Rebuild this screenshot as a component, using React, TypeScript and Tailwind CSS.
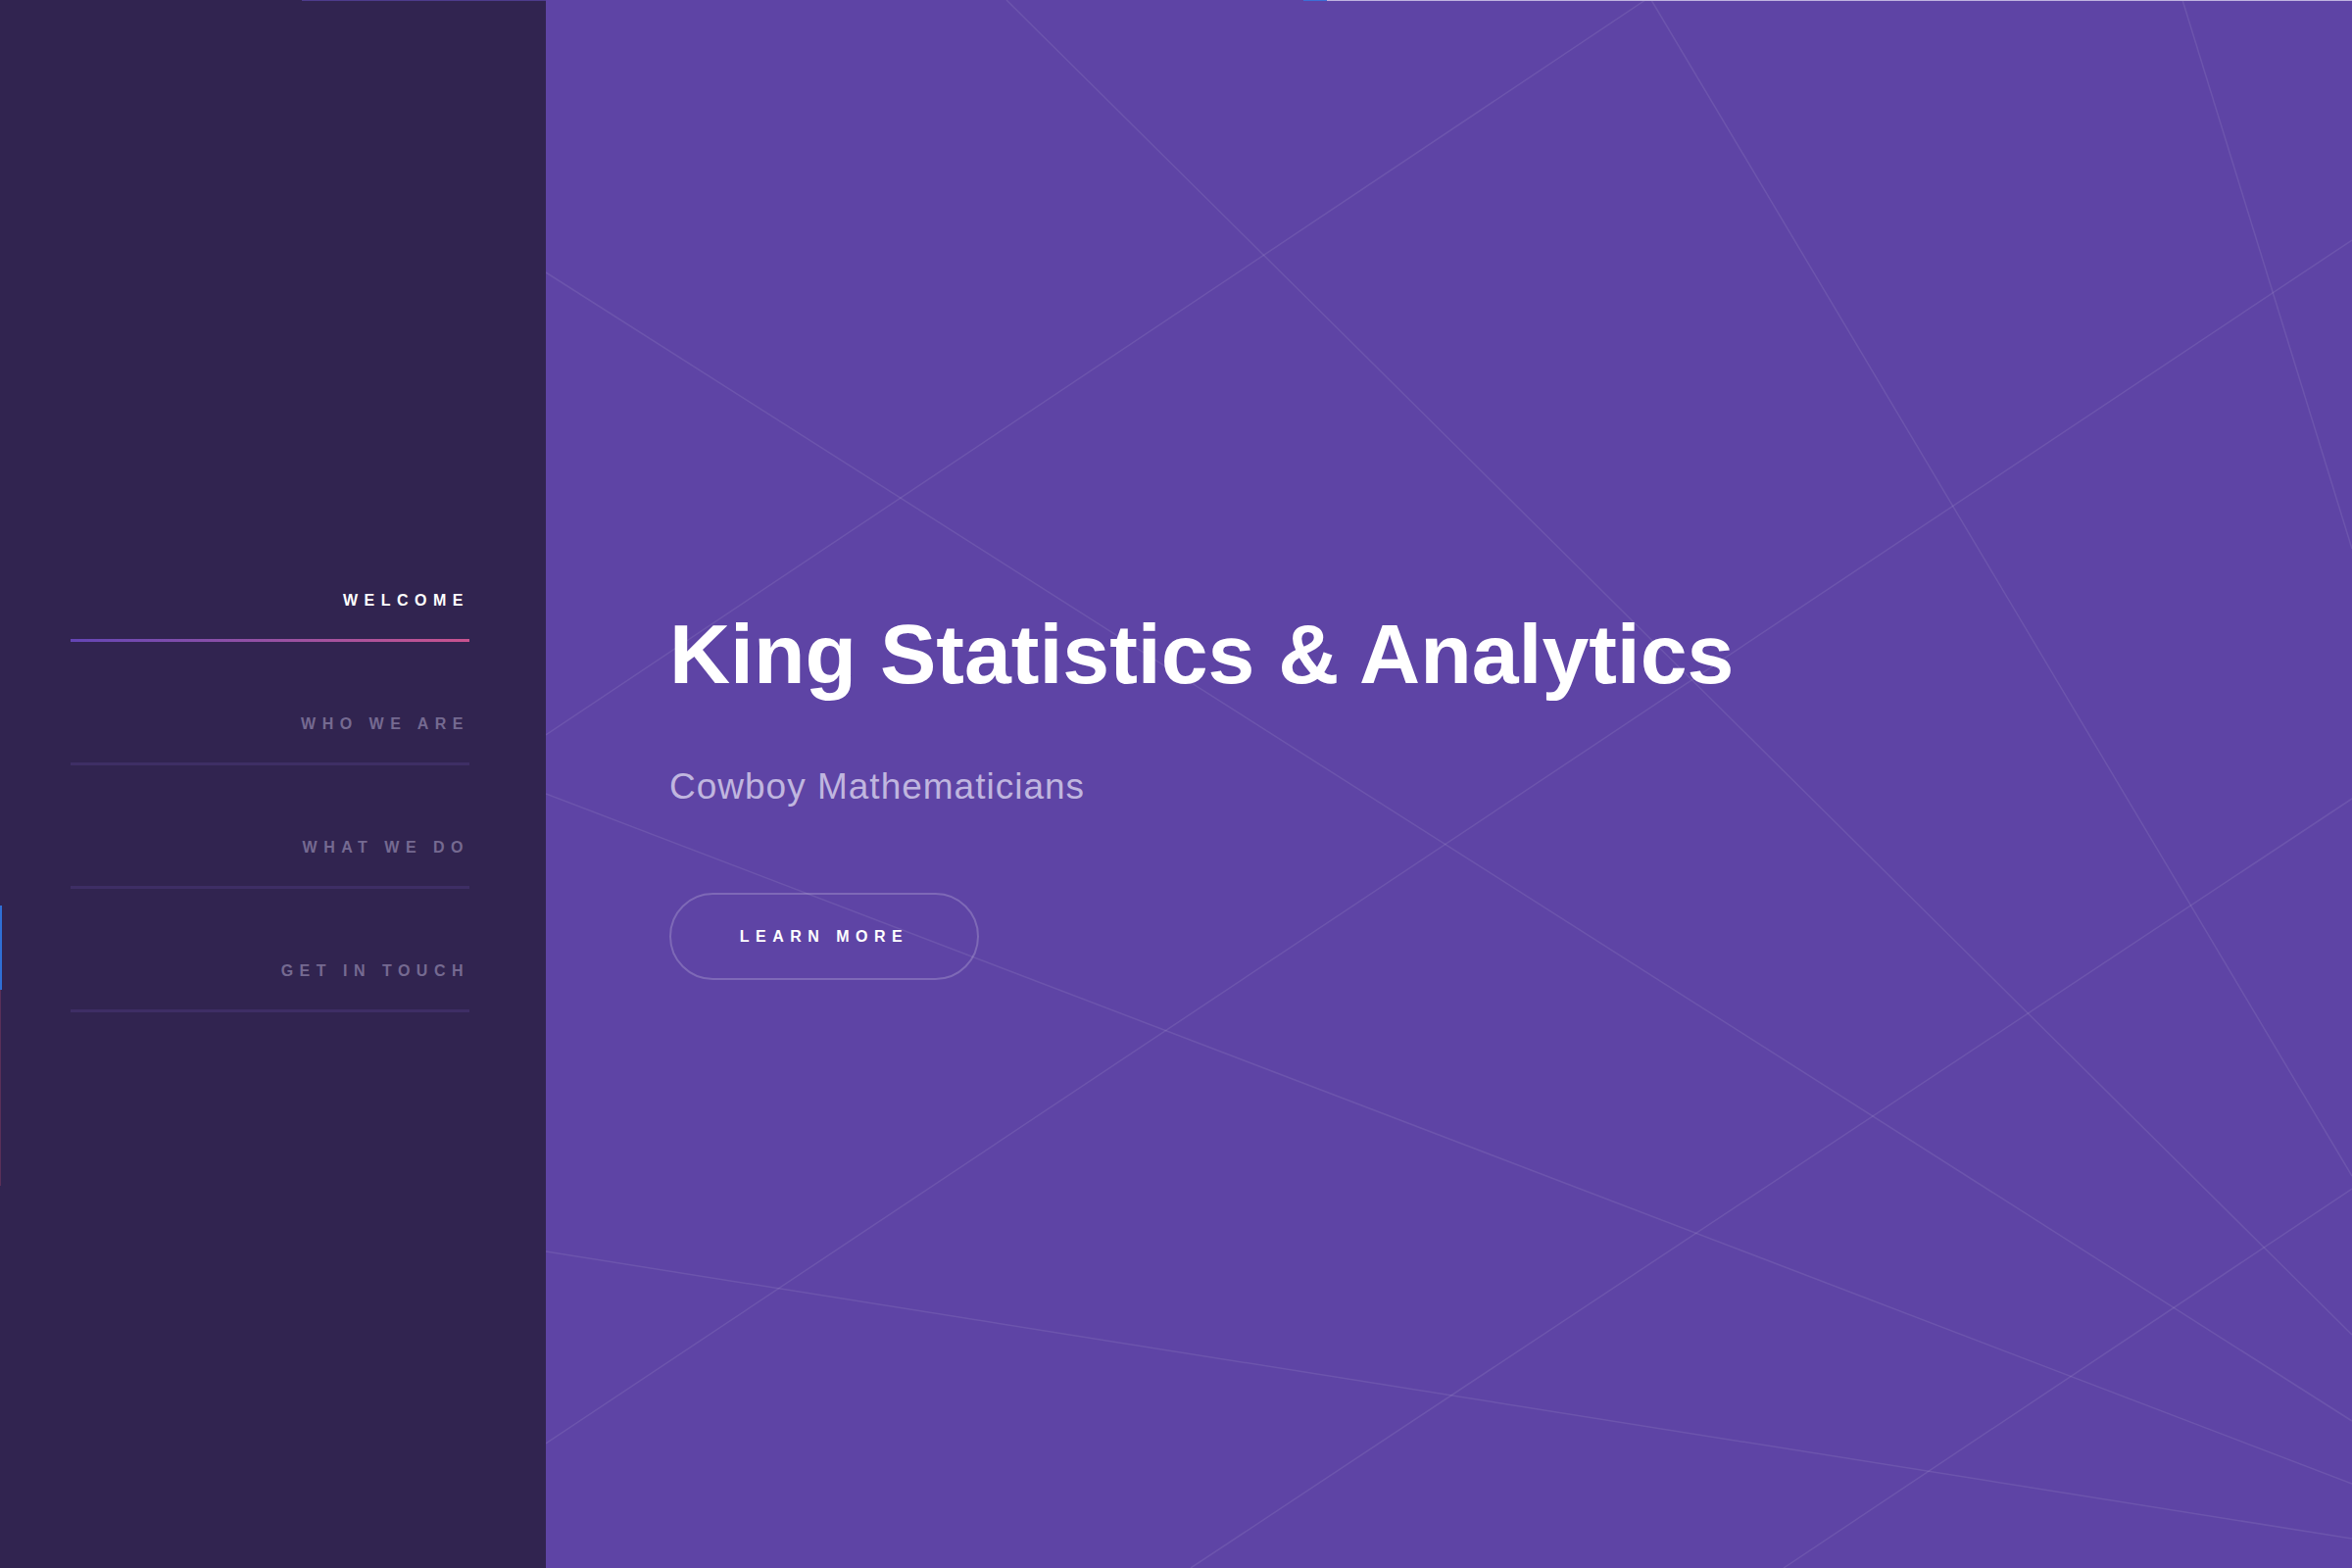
import React from 'react';

const navItems = [
  { label: 'WELCOME', active: true },
  { label: 'WHO WE ARE', active: false },
  { label: 'WHAT WE DO', active: false },
  { label: 'GET IN TOUCH', active: false },
];

// background polygon lines, coords relative to the main panel (1843 x 1600)
const lines: Array<[number, number, number, number]> = [
  [470, 0, 1843, 1362],
  [1122, 0, 0, 750],
  [1128, 0, 1843, 1200],
  [1670, 0, 1843, 560],
  [0, 278, 1843, 1450],
  [1843, 245, 0, 1473],
  [0, 810, 1843, 1514],
  [0, 1277, 1843, 1570],
  [1843, 1213, 1263, 1600],
  [1843, 815, 658, 1600],
];

function Sidebar() {
  return (
    <aside className="relative w-[557px] shrink-0 bg-[#312450] pt-[529px] pl-[72px] pr-[78px]">
      <div className="absolute left-[308px] top-0 h-px w-[249px] bg-[#4d3b8c]" />
      <div className="absolute left-0 top-[924px] h-[86px] w-[2px] bg-[#2f6fd6]" />
      <div className="absolute left-0 top-[1010px] h-[200px] w-px bg-[#5a2f58]" />
      <nav className="flex flex-col">
        {navItems.map((item) => (
          <a key={item.label} href="#" className="block pt-[74px]">
            <span
              className={`block text-right text-[16px] leading-[20px] font-bold tracking-[6.5px] ${
                item.active ? 'text-white' : 'text-[#756a91]'
              }`}
            >
              {item.label}
            </span>
            <span
              className={`mt-[29px] block h-[3px] w-full ${
                item.active
                  ? 'bg-gradient-to-r from-[#6445b5] to-[#c9528f]'
                  : 'bg-[#3e2e65]'
              }`}
            />
          </a>
        ))}
      </nav>
    </aside>
  );
}

function Hero() {
  return (
    <main className="relative flex-1 overflow-hidden bg-[#5e44a5]">
      <svg
        className="absolute inset-0 h-full w-full"
        viewBox="0 0 1843 1600"
        preserveAspectRatio="none"
      >
        {lines.map(([x1, y1, x2, y2], i) => (
          <line
            key={i}
            x1={x1}
            y1={y1}
            x2={x2}
            y2={y2}
            stroke="#ffffff"
            strokeOpacity={0.09}
            strokeWidth={1.5}
          />
        ))}
      </svg>
      <div className="absolute left-[773px] top-0 h-px w-[24px] bg-[#3b6fd6]" />
      <div className="absolute left-[797px] top-0 h-px right-0 bg-[#bfb4e0]" />

      <div className="relative flex flex-col items-start pt-[624px] pl-[126px]">
        <h1 className="text-[86px] leading-none font-bold text-white">
          King Statistics &amp; Analytics
        </h1>
        <p className="mt-[74px] text-[37px] leading-none tracking-[1px] text-[#c0b6df]">
          Cowboy Mathematicians
        </p>
        <button className="mt-[90px] flex h-[89px] w-[316px] items-center justify-center rounded-full border-2 border-white/20 text-[16px] font-bold tracking-[6.5px] text-white">
          LEARN MORE
        </button>
      </div>
    </main>
  );
}

export default function App() {
  return (
    <div
      className="flex h-[1600px] w-[2400px] overflow-hidden"
      style={{ fontFamily: '"Liberation Sans", Arial, sans-serif' }}
    >
      <Sidebar />
      <Hero />
    </div>
  );
}
